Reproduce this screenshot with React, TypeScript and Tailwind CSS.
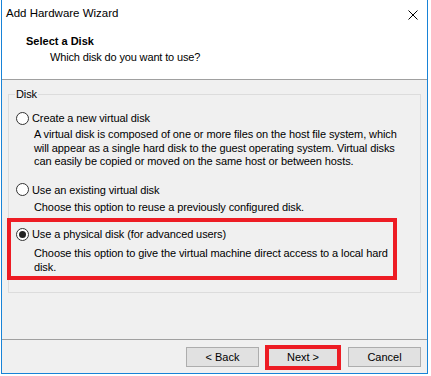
import React from "react"

const font = "font-['Liberation_Sans',Arial,sans-serif]"

function Radio({ checked, label }: { checked?: boolean; label: string }) {
  return (
    <div className="flex h-[16px] items-center">
      <span className="flex h-[13px] w-[13px] items-center justify-center rounded-full border border-[#333333] bg-white">
        {checked && <span className="h-[7px] w-[7px] rounded-full bg-[#222222]" />}
      </span>
      <span className="ml-[3px] leading-[16px]">{label}</span>
    </div>
  )
}

function Desc({ lines, className = "" }: { lines: string[]; className?: string }) {
  return (
    <div className={`pl-[18px] leading-[13.5px] ${className}`}>
      {lines.map((l, i) => (
        <div key={i} className="whitespace-nowrap">{l}</div>
      ))}
    </div>
  )
}

export default function App() {
  return (
    <div className={`h-[376px] w-[431px] overflow-hidden bg-white text-[11px] text-black ${font}`}>
      <div className="ml-[1px] flex h-[374px] w-[427px] flex-col border border-t-0 border-[#1883d7]">
        {/* header */}
        <div className="h-[80px] border-b border-[#a0a0a0] bg-white">
          <div className="flex h-[28px] items-center justify-between pl-[4px] pr-[9px]">
            <span className="text-[11.5px]">Add Hardware Wizard</span>
            <svg width="10" height="10" viewBox="0 0 10 10" className="mt-[1px]">
              <path d="M0.5 0.5 L9.5 9.5 M9.5 0.5 L0.5 9.5" stroke="#000" strokeWidth="1" />
            </svg>
          </div>
          <div className="pl-[24px] pt-[5px] font-bold leading-[16px]">Select a Disk</div>
          <div className="pl-[48px] leading-[16px] tracking-[-0.15px]">Which disk do you want to use?</div>
        </div>

        {/* body */}
        <div className="flex-1 bg-[#f0f0f0] px-[6px] pt-[6px] tracking-[-0.1px]">
          <fieldset className="h-[207px] border border-[#dcdcdc] px-[6px]">
            <legend className="px-[1px] leading-[16px]">Disk</legend>
            <div className="pl-[1px] pt-[8px]">
              <Radio label="Create a new virtual disk" />
              <Desc
                className="mt-[2px]"
                lines={[
                  "A virtual disk is composed of one or more files on the host file system, which",
                  "will appear as a single hard disk to the guest operating system. Virtual disks",
                  "can easily be copied or moved on the same host or between hosts.",
                ]}
              />

              <div className="mt-[13px]">
                <Radio label="Use an existing virtual disk" />
                <Desc className="mt-[3px]" lines={["Choose this option to reuse a previously configured disk."]} />
              </div>

              <div className="ml-[-9px] mt-[4px] w-[390px] border-4 border-[#ed1c24] pb-[2px] pl-[5px] pt-[4px]">
                <Radio checked label="Use a physical disk (for advanced users)" />
                <Desc
                  className="mt-[5px]"
                  lines={["Choose this option to give the virtual machine direct access to a local hard", "disk."]}
                />
              </div>
            </div>
          </fieldset>
        </div>

        {/* footer */}
        <div className="flex h-[34px] items-center justify-end border-t border-[#a0a0a0] bg-[#f0f0f0] pr-[6px] pt-[1px]">
          <button className="h-[20px] w-[73px] border border-[#adadad] bg-[#e1e1e1] leading-[18px]">&lt; Back</button>
          <button className="ml-[6px] h-[25px] w-[76px] border-4 border-[#ed1c24] bg-[#e1e1e1] leading-[17px]">Next &gt;</button>
          <button className="ml-[7px] h-[20px] w-[73px] border border-[#adadad] bg-[#e1e1e1] leading-[18px]">Cancel</button>
        </div>
      </div>
    </div>
  )
}
